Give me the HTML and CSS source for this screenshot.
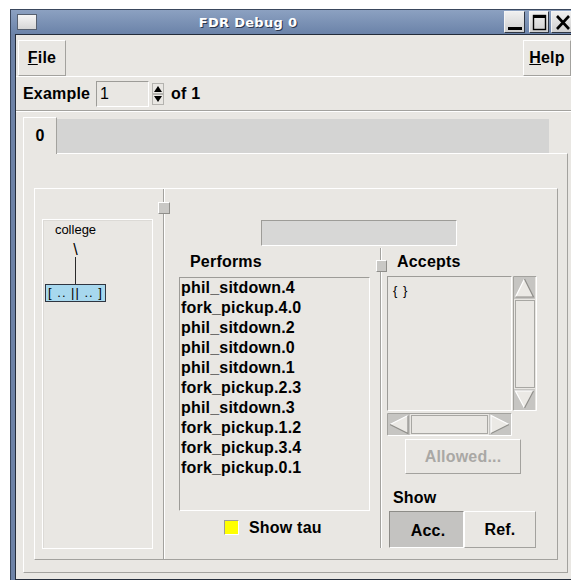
FILE: index.html
```html
<!DOCTYPE html>
<html lang="en">
<head>
<meta charset="utf-8">
<title>FDR Debug 0</title>
<link rel="stylesheet" href="styles.css">
</head>
<body>
<div class="window">
  <div class="titlebar">
    <span class="winicon"></span>
    <span class="title">FDR Debug 0</span>
    <span class="tbtn tbtn-min">
      <svg width="19" height="20" viewBox="0 0 19 20"><rect x="3" y="15" width="14" height="3" fill="#000"/></svg>
    </span>
    <span class="tbtn tbtn-max">
      <svg width="18" height="20" viewBox="0 0 18 20"><rect x="3.5" y="3.5" width="12" height="14" fill="none" stroke="#000" stroke-width="1.4"/><rect x="3" y="3" width="13" height="3" fill="#000"/></svg>
    </span>
    <span class="tbtn tbtn-close">
      <svg width="19" height="20" viewBox="0 0 19 20"><path d="M5 4 L17 17 M17 4 L5 17" stroke="#000" stroke-width="2.6"/></svg>
    </span>
  </div>

  <div class="client">
    <div class="menubar">
      <div class="menubtn"><u>F</u>ile</div>
      <div class="menubtn"><u>H</u>elp</div>
    </div>

    <div class="examplebar">
      <span class="ex-label">Example</span>
      <span class="entry">1</span>
      <svg class="spinner" width="12" height="22" viewBox="0 0 12 22">
        <rect x="0.5" y="0.5" width="11" height="10" fill="#e9e7e3" stroke="#b4b3af"/>
        <polygon points="2,9 6,3 10,9" fill="#000"/>
        <rect x="0.5" y="11.5" width="11" height="10" fill="#e9e7e3" stroke="#b4b3af"/>
        <polygon points="2,13 10,13 6,19" fill="#000"/>
      </svg>
      <span class="of-label">of 1</span>
    </div>

    <div class="notebook">
      <div class="tabrow">
        <div class="tab">0</div>
        <div class="tabfill"></div>
      </div>
      <div class="panel">
        <div class="group">
          <div class="leftpane">
            <div class="treebox">
              <div class="tree">
                <span class="tree-name">college</span>
                <span class="tree-slash">\</span>
                <span class="tree-link"></span>
                <span class="tree-node">[ .. || .. ]</span>
              </div>
            </div>
          </div>

          <div class="sash sash-main"><span class="handle handle-main"></span></div>

          <div class="rightpane">
            <div class="status-entry"></div>
            <div class="split">
              <div class="performs">
                <div class="col-label performs-label">Performs</div>
                <div class="listbox performs-list">
                  <div class="item">phil_sitdown.4</div>
                  <div class="item">fork_pickup.4.0</div>
                  <div class="item">phil_sitdown.2</div>
                  <div class="item">phil_sitdown.0</div>
                  <div class="item">phil_sitdown.1</div>
                  <div class="item">fork_pickup.2.3</div>
                  <div class="item">phil_sitdown.3</div>
                  <div class="item">fork_pickup.1.2</div>
                  <div class="item">fork_pickup.3.4</div>
                  <div class="item">fork_pickup.0.1</div>
                </div>
                <div class="check-row">
                  <span class="checkmark"></span>
                  <span class="check-text">Show tau</span>
                </div>
              </div>

              <div class="sash sash-inner"><span class="handle handle-inner"></span></div>

              <div class="accepts">
                <div class="col-label accepts-label">Accepts</div>
                <div class="acc-row">
                  <div class="listbox accepts-list"><span class="set">{ }</span></div>
                  <svg class="vscroll" width="24" height="135" viewBox="0 0 24 135">
                    <rect x="0" y="0" width="24" height="135" fill="#e9e7e3"/>
                    <path d="M0.5 134.5 V0.5 H23.5" fill="none" stroke="#a3a29e"/>
                    <path d="M0.5 134.5 H23.5 V0.5" fill="none" stroke="#ffffff"/>
                    <rect x="1" y="1" width="21" height="22" fill="#c6c5c2"/>
                    <polygon points="11.5,3 2.5,21 20.5,21" fill="#ebe9e5"/>
                    <path d="M2.5 21 L11.5 3" stroke="#ffffff" stroke-width="1.2"/>
                    <path d="M11.5 3 L20.5 21 H2.5" fill="none" stroke="#8f8e8a" stroke-width="1.2"/>
                    <rect x="2.5" y="24.5" width="19" height="87" fill="#e9e7e3" stroke="#a8a7a3"/>
                    <rect x="1" y="113" width="21" height="21" fill="#c6c5c2"/>
                    <polygon points="2.5,115 20.5,115 11.5,132" fill="#ebe9e5"/>
                    <path d="M11.5 132 L2.5 115 H20.5" fill="none" stroke="#ffffff" stroke-width="1.2"/>
                    <path d="M20.5 115 L11.5 132" stroke="#8f8e8a" stroke-width="1.2"/>
                  </svg>
                </div>
                <svg class="hscroll" width="125" height="23" viewBox="0 0 125 23">
                  <rect x="0" y="0" width="125" height="23" fill="#e9e7e3"/>
                  <path d="M0.5 22.5 V0.5 H124.5" fill="none" stroke="#a3a29e"/>
                  <path d="M0.5 22.5 H124.5 V0.5" fill="none" stroke="#ffffff"/>
                  <rect x="1" y="1" width="22" height="21" fill="#c6c5c2"/>
                  <polygon points="3,11.5 21,2.5 21,20.5" fill="#ebe9e5"/>
                  <path d="M21 2.5 L3 11.5" stroke="#ffffff" stroke-width="1.2"/>
                  <path d="M3 11.5 L21 20.5 V2.5" fill="none" stroke="#8f8e8a" stroke-width="1.2"/>
                  <rect x="24.5" y="2.5" width="76" height="18" fill="#e9e7e3" stroke="#a8a7a3"/>
                  <rect x="102" y="1" width="22" height="21" fill="#c6c5c2"/>
                  <polygon points="104,2.5 122,11.5 104,20.5" fill="#ebe9e5"/>
                  <path d="M104 20.5 V2.5 L122 11.5" fill="none" stroke="#ffffff" stroke-width="1.2"/>
                  <path d="M122 11.5 L104 20.5" stroke="#8f8e8a" stroke-width="1.2"/>
                </svg>
                <div class="allowed">Allowed...</div>
                <div class="col-label show-label">Show</div>
                <div class="radio-group">
                  <div class="radio radio-on">Acc.</div>
                  <div class="radio">Ref.</div>
                </div>
              </div>
            </div>
          </div>
        </div>
      </div>
    </div>
  </div>
</div>
</body>
</html>
```

FILE: styles.css
```css
* {
  box-sizing: border-box;
}

html,
body {
  margin: 0;
  padding: 0;
}

body {
  width: 571px;
  height: 583px;
  overflow: hidden;
  background: #ffffff;
  font-family: "Liberation Sans", Arial, sans-serif;
  font-size: 16px;
  font-weight: bold;
  letter-spacing: 0.2px;
  color: #000000;
}

/* ---------- window frame ---------- */
.window {
  margin: 9px 0 0 10px;
  width: 569px;
  background: #6d82a6;
  border: 1px solid #3a475d;
  border-bottom: none;
}

.titlebar {
  height: 24px;
  display: flex;
  align-items: center;
  padding-left: 6px;
  background: linear-gradient(#8ca1c1, #6b83a9);
}

.winicon {
  flex: none;
  width: 20px;
  height: 16px;
  border: 1px solid #56606f;
  background: linear-gradient(#f6f6f6, #d6d6d6);
}

.title {
  flex: none;
  width: 422px;
  margin-right: 45px;
  text-align: center;
  font-family: "DejaVu Sans", sans-serif;
  font-size: 13px;
  font-weight: bold;
  letter-spacing: 0.3px;
  color: #ffffff;
  text-shadow: 1px 1px 0 #2b374d;
}

.tbtn {
  flex: none;
  height: 22px;
  display: flex;
  border: 1px solid #2e3644;
  border-top-color: #f4f4f4;
  border-left-color: #f4f4f4;
  background: linear-gradient(#efefef, #cfcfcf);
}

.tbtn-min {
  width: 21px;
}

.tbtn-max {
  width: 20px;
  margin-left: 4px;
}

.tbtn-close {
  width: 21px;
  margin-left: 2px;
}

.client {
  margin: 0 4px 4px;
  height: 546px;
  border: 1px solid #242c3a;
  background: #e9e7e3;
}

/* ---------- menubar ---------- */
.menubar {
  height: 41px;
  display: flex;
  justify-content: space-between;
  align-items: flex-start;
  padding: 5px 2px 0;
}

.menubtn {
  width: 48px;
  height: 36px;
  display: flex;
  align-items: center;
  justify-content: center;
  border: 1px solid #a3a29e;
  border-top-color: #ffffff;
  border-left-color: #ffffff;
}

/* ---------- example selector ---------- */
.examplebar {
  height: 35px;
  display: flex;
  align-items: center;
  padding-left: 7px;
  border-top: 1px solid #ffffff;
  border-bottom: 1px solid #a3a29e;
}

.ex-label {
  width: 73px;
}

.entry {
  width: 53px;
  height: 26px;
  padding: 3px 0 0 3px;
  font-weight: normal;
  border: 1px solid #ffffff;
  border-top-color: #9d9c98;
  border-left-color: #9d9c98;
}

.spinner {
  margin-left: 3px;
  margin-right: 7px;
}

/* ---------- notebook ---------- */
.notebook {
  border-top: 1px solid #ffffff;
  padding: 5px 5px 6px 7px;
}

.tabrow {
  display: flex;
  align-items: flex-end;
}

.tab {
  position: relative;
  z-index: 1;
  width: 34px;
  height: 37px;
  margin-bottom: -1px;
  display: flex;
  align-items: center;
  justify-content: center;
  padding-bottom: 1px;
  background: #e9e7e3;
  border-top: 1px solid #ffffff;
  border-left: 1px solid #ffffff;
  border-right: 1px solid #a3a29e;
}

.tabfill {
  width: 492px;
  height: 34px;
  background: #d4d4d3;
}

.panel {
  width: 545px;
  height: 420px;
  padding: 34px 9px 12px 10px;
  border: 1px solid #a3a29e;
  border-top-color: #ffffff;
  border-left-color: #ffffff;
}

.group {
  height: 372px;
  display: flex;
  border: 1px solid #a3a29e;
  border-top-color: #ffffff;
  border-left-color: #ffffff;
}

/* ---------- process tree ---------- */
.leftpane {
  width: 128px;
  padding: 30px 10px 10px 7px;
}

.treebox {
  height: 100%;
  border: 1px solid #ffffff;
  box-shadow: inset 1px 1px 0 #dcdad6;
  padding-left: 2px;
}

.tree {
  width: 61px;
  display: flex;
  flex-direction: column;
  align-items: center;
  font-weight: normal;
  letter-spacing: 0;
}

.tree-name {
  margin-top: 2px;
  font-size: 13px;
  line-height: 16px;
}

.tree-slash {
  margin-top: 4px;
  font-size: 16px;
  line-height: 15px;
}

.tree-link {
  width: 1px;
  height: 27px;
  background: #2a2a2a;
}

.tree-node {
  width: 61px;
  height: 18px;
  border: 1px solid #2f3540;
  background: #a7d8ee;
  font-size: 13px;
  line-height: 15px;
  text-align: center;
  letter-spacing: 1px;
  white-space: nowrap;
}

/* ---------- sashes ---------- */
.sash {
  position: relative;
  width: 2px;
  border-left: 1px solid #a3a29e;
  border-right: 1px solid #ffffff;
}

.handle {
  position: absolute;
  width: 12px;
  height: 12px;
  background: #c9c8c5;
  border: 1px solid #8f8e8a;
  border-top-color: #ffffff;
  border-left-color: #ffffff;
}

.handle-main {
  left: -6px;
  top: 13px;
}

.handle-inner {
  left: -5px;
  top: 12px;
  width: 11px;
}

.sash-inner {
  height: 300px;
}

/* ---------- right side ---------- */
.rightpane {
  width: 392px;
  padding-top: 31px;
}

.status-entry {
  width: 196px;
  height: 26px;
  margin-left: 96px;
  background: #d7d7d6;
  border: 1px solid #ffffff;
  border-top-color: #9d9c98;
  border-left-color: #9d9c98;
}

.split {
  height: 300px;
  margin-top: 2px;
  display: flex;
}

.col-label {
  line-height: 20px;
}

.listbox {
  border: 1px solid #ffffff;
  border-top-color: #9d9c98;
  border-left-color: #9d9c98;
}

.performs {
  width: 215px;
  padding-top: 4px;
}

.performs-label {
  padding-left: 25px;
}

.performs-list {
  width: 191px;
  height: 234px;
  margin: 5px 0 0 14px;
  padding-left: 1px;
}

.item {
  line-height: 20px;
  white-space: nowrap;
}

.check-row {
  display: flex;
  align-items: center;
  margin: 9px 0 0 59px;
  height: 15px;
}

.checkmark {
  width: 15px;
  height: 15px;
  background: #ffff00;
  border: 1px solid #ffffff;
  border-top-color: #9d9c98;
  border-left-color: #9d9c98;
}

.check-text {
  margin-left: 10px;
}

.accepts {
  width: 175px;
  padding-top: 4px;
}

.accepts-label {
  padding-left: 15px;
}

.acc-row {
  display: flex;
  gap: 1px;
  margin: 4px 0 0 5px;
}

.accepts-list {
  width: 125px;
  height: 135px;
  padding: 4px 0 0 5px;
}

.set {
  font-weight: normal;
  font-size: 13px;
  letter-spacing: 1px;
}

.vscroll,
.hscroll {
  display: block;
}

.hscroll {
  margin: 2px 0 0 5px;
}

.allowed {
  width: 116px;
  height: 35px;
  margin: 3px 0 0 23px;
  display: flex;
  align-items: center;
  justify-content: center;
  color: #a9a8a5;
  border: 1px solid #a3a29e;
  border-top-color: #ffffff;
  border-left-color: #ffffff;
}

.show-label {
  margin-top: 14px;
  padding-left: 11px;
}

.radio-group {
  display: flex;
  margin: 3px 0 0 7px;
}

.radio {
  width: 72px;
  height: 37px;
  display: flex;
  align-items: center;
  justify-content: center;
  border: 1px solid #a3a29e;
  border-top-color: #ffffff;
  border-left-color: #ffffff;
}

.radio-on {
  width: 75px;
  padding: 3px 0 0 3px;
  background: #c4c3c1;
  border-color: #8d8c88;
  border-bottom-color: #ffffff;
  border-right-color: #ffffff;
}
```
